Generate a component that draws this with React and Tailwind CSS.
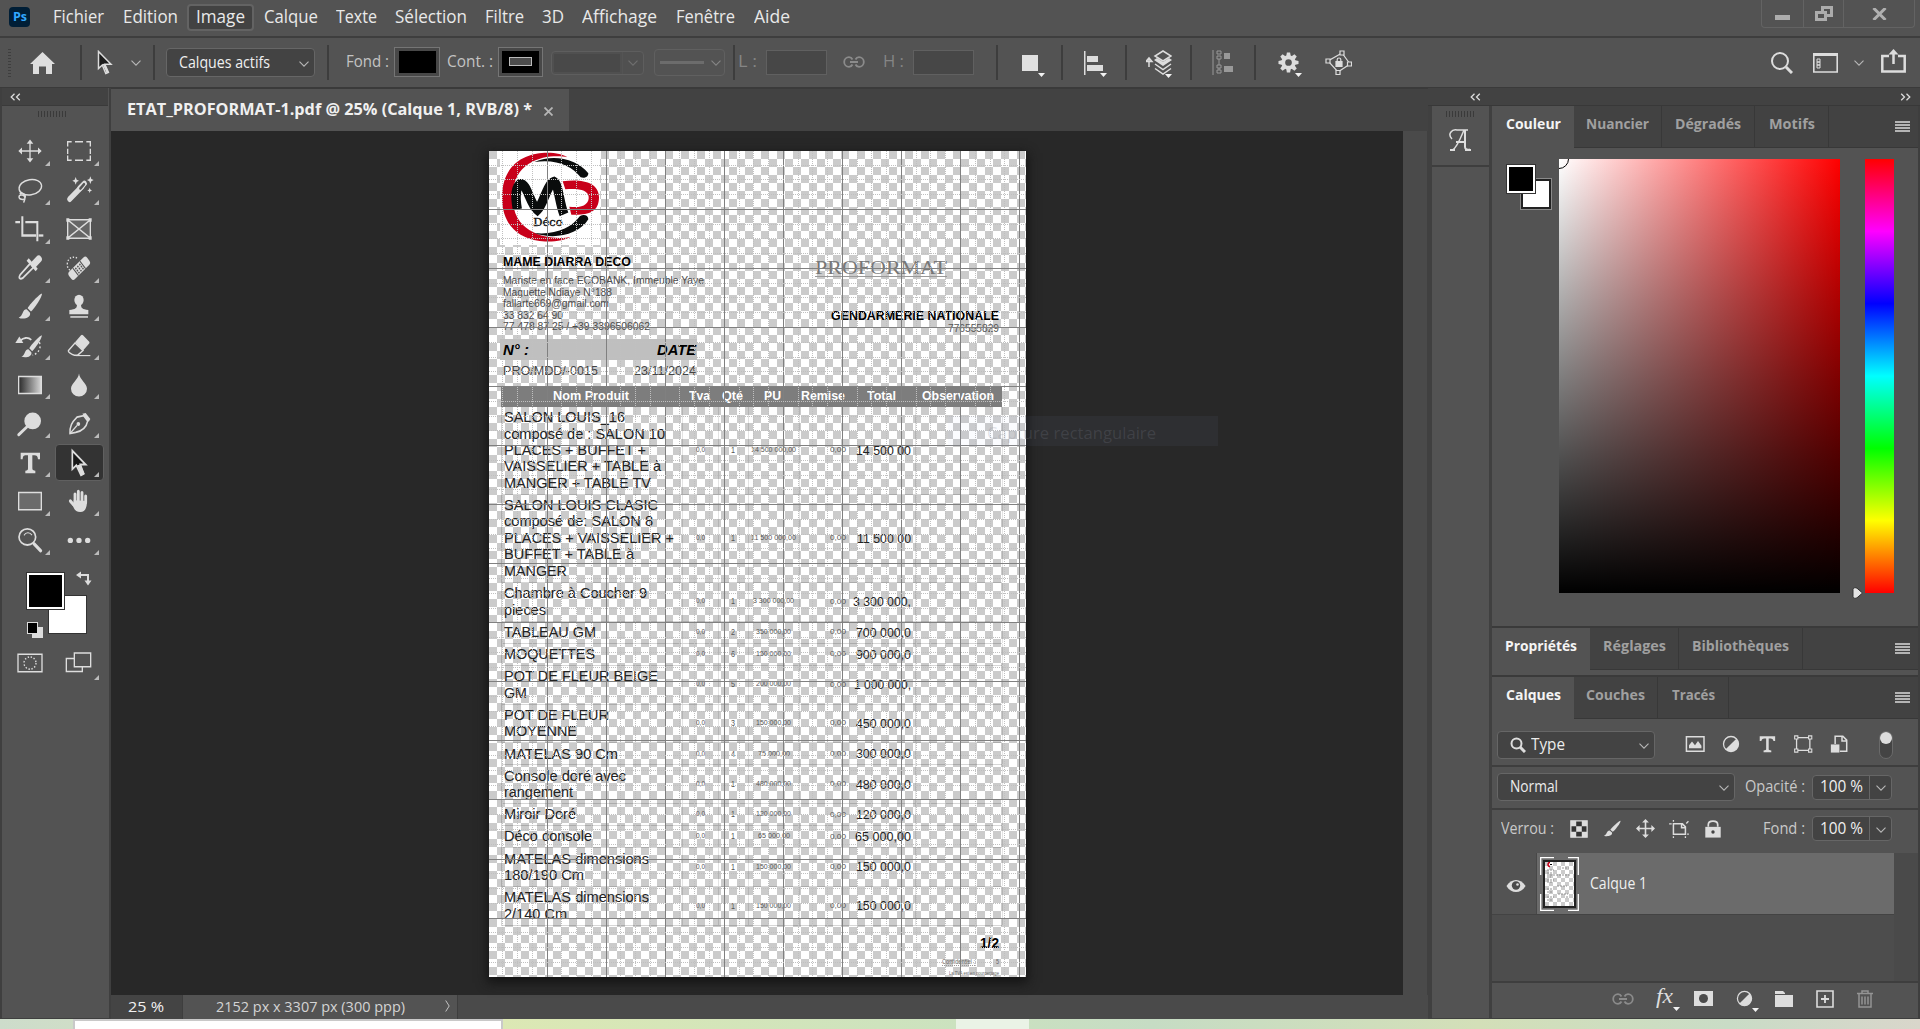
import { useLayoutEffect, useRef } from "react";

/* Text condensed or widened horizontally to a set width. */
function T({ w, className = "", children }) {
  const ref = useRef(null);
  useLayoutEffect(() => {
    const el = ref.current;
    el.style.transform = "none";
    const natural = el.getBoundingClientRect().width;
    if (natural) el.style.transform = `scaleX(${w / natural})`;
  }, [w, children]);
  return (
    <span className={"inline-block shrink-0 whitespace-pre " + className} style={{ width: w }}>
      <span ref={ref} className="inline-block origin-left">{children}</span>
    </span>
  );
}

/* Icon drawn on a centred 84x84 grid. */
function Ic({ className = "h-7 w-7", children }) {
  return (
    <svg viewBox="-42 -42 84 84" className={"shrink-0 overflow-visible " + className} fill="none" stroke="#dddddd" strokeWidth="5">
      {children}
    </svg>
  );
}
const F = { fill: "#dddddd", stroke: "none" };

const Chev = ({ className = "" }) => (
  <svg viewBox="0 0 10 6" className={"h-1.5 w-2.5 shrink-0 " + className} fill="none" stroke="#b8b8b8" strokeWidth="1.1">
    <path d="M.5.7 5 5.2 9.5.7" />
  </svg>
);
const Sep = ({ className }) => <div className={"h-[35px] w-0.5 shrink-0 bg-[#3d3d3d] " + className} />;
const Burger = () => (
  <div className="mr-2 flex w-[15px] flex-col gap-px">
    {[0, 1, 2, 3].map((i) => <i key={i} className="h-0.5 bg-[#b4b4b4]" />)}
  </div>
);
const Grip = ({ className }) => (
  <div className={"flex gap-0.5 " + className}>
    {Array.from({ length: 10 }, (_, i) => <i key={i} className="h-1.5 w-px bg-[#3a3a3a]" />)}
  </div>
);
const Double = ({ right }) => (
  <svg viewBox="0 0 11 8" className={"h-2 w-[11px] " + (right ? "-scale-x-100" : "")} fill="none" stroke="#dcdcdc" strokeWidth="1.3">
    <path d="M4.5.8 1.2 4l3.3 3.2M9.8.8 6.5 4l3.3 3.2" />
  </svg>
);
const Tri = ({ className }) => (
  <svg viewBox="0 0 7 4" className={"h-1 w-[7px] " + className} fill="#f2f2f2"><path d="M0 0h7L3.5 4z" /></svg>
);
const LinkIcon = ({ className, color = "#8b8b8b" }) => (
  <svg viewBox="0 0 22 12" className={"h-3 w-[22px] shrink-0 " + className} fill="none" stroke={color} strokeWidth="1.8">
    <path d="M9.5 3.5C8.600 1.600 7.500 1.200 6 1.200a4.800 4.800 0 0 0 0 9.600c1.500 0 2.600-.4 3.500-2.300M12.500 3.500c.9-1.900 2-2.300 3.500-2.300a4.800 4.800 0 0 1 0 9.600c-1.500 0-2.600-.4-3.500-2.300M7 6h8" />
  </svg>
);

const MENU = [
  ["Fichier", 51, "w-[69px]"], ["Edition", 55, "w-[74px]"], ["Image", 49, "w-[67px] rounded border-2 border-[#636363] bg-[#424242]"],
  ["Calque", 54, "w-[73px]"], ["Texte", 41, "w-[59px]"], ["Sélection", 72, "w-[90px]"], ["Filtre", 39, "w-[57px]"],
  ["3D", 22, "w-[40px]"], ["Affichage", 75, "w-[93px]"], ["Fenêtre", 59, "w-[79px]"], ["Aide", 36, "w-[54px]"],
];

function MenuBar() {
  return (
    <header className="flex h-9 items-start bg-[#535353]">
      <div className="ml-[9px] mt-[7px] flex h-5 w-[21px] items-center justify-center rounded bg-[#001e36] text-[12px] font-bold leading-none text-[#31a8ff]">
        <T w={14}>Ps</T>
      </div>
      <nav className="ml-3.5 flex pt-[4px] text-[17.500px] leading-none text-[#e9e9e9]">
        {MENU.map(([t, w, c]) => (
          <div key={t} className={"flex h-[27px] items-center justify-center pb-px " + c}><T w={w}>{t}</T></div>
        ))}
      </nav>
      <div className="ml-auto mr-[5px] flex h-7 rounded-b border border-t-0 border-[#636363]">
        <div className="flex w-[42px] items-center justify-center border-r border-[#636363]"><i className="mt-2 h-[5px] w-[15px] bg-[#acacac]" /></div>
        <div className="flex w-10 items-center justify-center border-r border-[#636363]">
          <svg viewBox="0 0 18 15" className="h-[15px] w-[18px]" fill="none" stroke="#acacac" strokeWidth="3"><path d="M1.500 6.500h9v7h-9zM7.500 5V1.500h9v8H12" /></svg>
        </div>
        <div className="flex w-[70px] items-center justify-center">
          <svg viewBox="0 0 15 12" className="h-3 w-[15px]" stroke="#b0b0b0" strokeWidth="3"><path d="M1.500 0 13.500 12M13.500 0 1.500 12" /></svg>
        </div>
      </div>
    </header>
  );
}

const Swatch = ({ className, children }) => (
  <div className={"flex h-[30px] shrink-0 items-center justify-center border border-[#757575] bg-[#484848] " + className}>
    <div className="flex h-[22px] w-[37px] items-center justify-center bg-black">{children}</div>
  </div>
);

function OptionsBar() {
  return (
    <div className="flex h-[52px] items-center border-b border-t-2 border-b-[#3a3a3a] border-t-[#3e3e3e] bg-[#535353] text-[15.500px] leading-none text-[#c3c3c3]">
      <div className="ml-2 h-7 w-[3px] bg-[repeating-linear-gradient(#3e3e3e_0_1px,transparent_1px_3px)]" />
      <svg viewBox="0 0 25 22" className="ml-[19px] h-[22px] w-[25px] shrink-0" fill="#dedede"><path d="M12.500 0 25 12h-3v10h-6v-7.500H9V22H3V12H0z" /></svg>
      <Sep className="ml-[25px]" />
      <svg viewBox="0 0 16 25" className="ml-[15px] h-[25px] w-4 shrink-0" stroke="#dddddd" strokeWidth="1.500"><path d="M1.500 1.500v17l3.800-3.500 3.500 8.500 2.600-1.200-3.600-8H14z" fill="#1d1d1d" /><path d="m5.500 14 4 9 2-1-3.500-8z" fill="#ddd" stroke="none" /></svg>
      <Chev className="ml-[18px]" />
      <Sep className="ml-3" />
      <div className="ml-[11px] flex h-[29px] w-[149px] shrink-0 items-center rounded border border-[#666] bg-[#434343] pl-3 pr-[5px] text-[#f0f0f0]">
        <T w={91}>Calques actifs</T><Chev className="ml-auto mt-0.5" />
      </div>
      <Sep className="ml-3" />
      <T w={43} className="-mt-0.5 ml-[17px]">Fond :</T>
      <Swatch className="-mt-0.5 ml-[5px] w-[46px]" />
      <T w={46} className="-mt-0.5 ml-[7px]">Cont. :</T>
      <Swatch className="-mt-0.5 ml-[5px] w-[45px]"><i className="h-[9px] w-[23px] border border-[#bbb] bg-[#4d4d4d]" /></Swatch>
      <div className="ml-2 flex h-6 w-[93px] shrink-0 rounded-sm border border-[#5e5e5e] bg-[#505050]">
        <div className="m-0.5 w-[66px] bg-[#494949]" /><div className="flex flex-1 items-center justify-center border-l border-[#5e5e5e] opacity-30"><Chev /></div>
      </div>
      <div className="ml-2.5 flex h-[27px] w-[71px] shrink-0 items-center rounded border border-[#606060] pl-[5px]">
        <i className="h-[3px] w-[44px] bg-[#6c6c6c]" /><Chev className="ml-[7px] opacity-50" />
      </div>
      <Sep className="ml-2" />
      <T w={19} className="-mt-0.5 ml-[3px] text-[#858585]">L :</T>
      <div className="ml-[9px] h-[25px] w-[61px] shrink-0 border border-[#606060] bg-[#474747]" />
      <LinkIcon className="-mt-0.5 ml-4" />
      <T w={21} className="-mt-0.5 ml-[18px] text-[#858585]">H :</T>
      <div className="ml-[9px] h-[25px] w-[61px] shrink-0 border border-[#606060] bg-[#474747]" />
      <Sep className="ml-[22px]" />
      <div className="relative ml-6 h-4 w-[22px] shrink-0"><i className="block h-4 w-4 bg-[#e0e0e0]" /><Tri className="absolute -bottom-[6px] -right-[1px]" /></div>
      <Sep className="ml-[17px]" />
      <div className="relative ml-[21px] w-[22px] shrink-0">
        <svg viewBox="0 0 22 24" className="h-6 w-[22px]" fill="#ddd"><path d="M0 0h1.500v24H0zM3 5h11v6H3zM3 14h16v6H3z" /></svg><Tri className="absolute -bottom-[2px] -right-[1px]" />
      </div>
      <Sep className="ml-[19px]" />
      <div className="relative ml-[19px] w-[26px] shrink-0">
        <svg viewBox="0 0 26 26" className="h-[26px] w-[26px]" fill="none" stroke="#ddd" strokeWidth="1.500"><path d="M3 17V9M0 11.500 3 8l3 3.500zM17 1l8 5-8 5-8-5z" /><path d="m8 10 9 6 9-6-3-2-6 4-6-4z" fill="#ddd" stroke="none" /><path d="m9 14 8 5.500 8-5.500M9 18.500l8 5.500 8-5.500" /></svg><Tri className="absolute -bottom-[2px] right-0" />
      </div>
      <Sep className="ml-[18px]" />
      <svg viewBox="0 0 22 25" className="ml-5 h-[25px] w-[22px] shrink-0 fill-[#999]" stroke="#999"><path d="M1 0v25M7 6.500v14" fill="none" /><path d="M5 1h4v3H5zM5 6h4v3H5zM5 15h4v3H5zM5 20h4v3H5z" fill="#535353" /><path d="M12 3h6v6h-6zM12 16h9v6h-9z" stroke="none" /></svg>
      <Sep className="ml-5" />
      <div className="relative ml-[22px] w-[23px] shrink-0">
        <svg viewBox="-11 -11 22 22" className="h-[21px] w-[21px]" fill="#ddd">
          {Array.from({ length: 8 }, (_, i) => <path key={i} d="M-2.500 -6-1.700 -10.500h3.400L2.500 -6z" transform={`rotate(${i * 45})`} />)}
          <circle r="5.500" fill="none" stroke="#ddd" strokeWidth="4" />
        </svg><Tri className="absolute -bottom-[4px] -right-px" />
      </div>
      <svg viewBox="0 0 27 25" className="ml-6 h-[25px] w-[27px] shrink-0" fill="#535353" stroke="#ddd" strokeWidth="1.200"><path d="M17 3 3 11l10 11 12-8z" /><path d="M15 1h4v4h-4zM1 9h4v4H1zM22.500 12h4v4h-4zM11 20.500h4v4h-4z" /><path d="M11 11.500h6v5h-6z" fill="#ddd" /><path d="M12.200 11.500V9.500c0-2 3.600-2 3.600 0v2" fill="none" /></svg>
      <svg viewBox="0 0 22 22" className="ml-auto h-[22px] w-[22px] shrink-0" fill="none" stroke="#ddd"><circle cx="9" cy="9" r="8" strokeWidth="2" /><path d="m15 15 6 6" strokeWidth="3" /></svg>
      <svg viewBox="0 0 25 20" className="ml-5 h-5 w-[25px] shrink-0" fill="none" stroke="#ddd"><path d="M.8 1h23.400v18H.8z" strokeWidth="1.600" /><path d="M0 1.500h25" strokeWidth="3" /><path d="M4 6h3v3H4zM4 9h3v3H4zM4 12h3v3H4z" /></svg>
      <Chev className="ml-4" />
      <svg viewBox="0 0 25 24" className="ml-[17px] mr-3.5 h-6 w-[25px] shrink-0 -translate-y-0.5" fill="none" stroke="#ddd" strokeWidth="2.500"><path d="M8 7H1.300v15.500h22.400V7H17M12.500 15V4" /><path d="M7.500 5.500 12.500 0l5 5.500z" fill="#ddd" stroke="none" /></svg>
    </div>
  );
}

const brush = <><path {...F} d="M36-35C30-35-2-6-7 3L3 12C14 4 37-27 36-35z" /><path {...F} d="M-10 6C-24 6-20 24-34 28-20 34 4 28 0 15z" /></>;
const cursor = <><path d="M-20-32V16L-8 6 6 32 14 28 4 4H20z" fill="#161616" strokeWidth="5" /><path {...F} d="M-6 6 7 33 17 28 4 4z" /></>;
const TOOLS = [
  <><path d="M-28 0H28M0-22V22" strokeWidth="4" /><path {...F} d="M-35 0-24-9V9zM35 0 24-9V9zM0-30-10-19H10zM0 30-10 19H10z" /></>,
  <path d="M-34-12V-24H-22M-12-24H12M22-24H34V-12M34-6V8M34 12V24H22M12 24H-12M-22 24H-34V12M-34 8V-6" strokeWidth="4" />,
  <><ellipse cx="2" cy="-7" rx="34" ry="20" transform="rotate(-8)" strokeWidth="4" /><path d="M-31 10c10-5 20 4 16 11s-18 3-18-3 14-7 17 0-2 10-3 15" strokeWidth="4" /></>,
  <><path d="M-28 24 10-10" strokeWidth="15" strokeLinecap="round" /><path d="M2-4 16-17" stroke="#dddddd" strokeWidth="15" strokeLinecap="round" /><path d="M4-4 15-15" stroke="#535353" strokeWidth="7" strokeLinecap="round" /><path {...F} d="M-10-34l3 7 7 3-7 3-3 7-3-7-7-3 7-3zM34-36l3 7 7 3-7 3-3 7-3-7-7-3 7-3zM32-6l2 5 5 2-5 2-2 5-2-5-5-2 5-2z" /></>,
  <><path d="M-23-33V17H18M-44-18H-30M-14-18H22V32" strokeWidth="6" /><path d="M26 17H40" strokeWidth="6" /></>,
  <><path d="M-34-24H34V24H-34z" strokeWidth="4" fill="#666" /><path d="M-34-24 34 24M34-24-34 24" strokeWidth="4" /><path {...F} d="M-38-28h9v9h-9zM29-28h9v9h-9zM-38 19h9v9h-9zM29 19h9v9h-9z" /></>,
  <><path d="M2-13-29 17C-36 27-30 31-20 25L12-3" strokeWidth="5" /><path d="M12-10 26-23" strokeWidth="19" strokeLinecap="round" /><path d="M-7-22 20 5" strokeWidth="9" /></>,
  <><path d="M-6-26C-18-32-34-26-35-12-36 0-30 6-24 6" strokeDasharray="4 5" strokeWidth="4" /><g transform="rotate(-41)"><rect x="-36" y="-12" width="72" height="26" rx="8" {...F} /><path d="M-14-12V14M14-12V14" stroke="#535353" strokeWidth="3" /><g fill="#535353" stroke="none">{[-8, 0, 8].map((x) => [-5, 2, 9].map((y) => <circle key={x + "," + y} cx={x} cy={y} r="2.500" />))}</g></g></>,
  brush,
  <><circle cx="0" cy="-18" r="14" {...F} /><path {...F} d="M-6-8H6C6 4 10 5 28 8V19H-29V8C-10 5-6 4-6-8z" /><path d="M-26 26H27" strokeWidth="4" /></>,
  <><g transform="translate(4 3) scale(.88)">{brush}</g><path d="M-32-12C-20-22-6-24 4-16" strokeWidth="5" /><path {...F} d="M-44-8-32-25-20-8z" /><path d="M28-10c8 18-6 30-20 34" strokeDasharray="5 6" strokeWidth="4" /></>,
  <><path {...F} d="M6-28C8-30 10-30 12-28L30-12C32-10 32-8 30-6L12 12-12-10z" /><path d="M-12-8-32 12C-34 16-22 22-14 24L-4 24 12 12z" strokeWidth="4" /><path d="M-10 25H34" strokeWidth="3" /></>,
  <><defs><linearGradient id="gr"><stop stopColor="#2a2a2a" /><stop offset="1" stopColor="#d8d8d8" /></linearGradient></defs><path d="M-34-22H34V22H-34z" fill="url(#gr)" strokeWidth="4" /></>,
  <path {...F} d="M0-30C2-14 24-4 24 10A24 20 0 0 1-24 10C-24-4-2-14 0-30z" />,
  <><ellipse cx="8" cy="-8" rx="25" ry="22" {...F} /><path d="M-10 8-34 28" strokeWidth="8" strokeLinecap="round" /></>,
  <><path d="M-27 25C-28 6-22-4-6-18L14-22 26-8C22 10 10 18-10 22z" strokeWidth="4.500" /><path {...F} d="M10-27 20-29 34-13 29-6z" /><path d="M-27 25-6 4" strokeWidth="3.500" /><circle cx="-2" cy="0" r="5.500" {...F} /></>,
  <path {...F} d="M-28-27H30V-10H24C23-18 20-20 13-20H7V14C7 19 10 20 16 20V27H-14V20C-8 20-6 19-6 14V-20H-12C-19-20-21-18-22-10H-28z" />,
  cursor,
  <path d="M-34-22H34V23H-34z" fill="#6b6b6b" strokeWidth="4" />,
  <><path d="M-12 2V-18M-2 0V-25M9 0V-22M20 4V-13M-26 0-16 10" strokeWidth="8.500" strokeLinecap="round" /><path {...F} d="M-22 4C-16 20-12 29 4 29S24 14 24 0L-16-2V6z" /></>,
  <><ellipse cx="-8" cy="-8" rx="25" ry="21" strokeWidth="5" /><path d="M-18-12C-12-22 0-20 6-13" strokeWidth="3" /><path d="M12 10 32 28" strokeWidth="9" strokeLinecap="round" /></>,
  <g {...F}><ellipse cx="-26" cy="1" rx="8" ry="7" /><ellipse cy="1" rx="8" ry="7" /><ellipse cx="26" cy="1" rx="8" ry="7" /></g>,
];

function ToolPanel() {
  return (
    <aside className="flex w-[111px] flex-col border-x-2 border-b border-[#3f3f3f] bg-[#535353] pr-px">
      <div className="flex h-[18px] items-center border-b border-[#3a3a3a] bg-[#424242] pl-2"><Double /></div>
      <Grip className="ml-[36px] mt-[5px]" />
      <div className="ml-[4px] mt-[15px] grid grid-cols-[49px_49px] auto-rows-[38.900px]">
        {TOOLS.map((t, i) => (
          <div key={i} className="relative flex items-center justify-center">
            {i === 17 && <div className="absolute inset-x-0 inset-y-px rounded border border-[#606060] bg-[#333]" />}
            <Ic className="relative h-7 w-7 -translate-x-px"><g transform="scale(1 1.148)">{t}</g></Ic>
            {i !== 5 && <svg viewBox="0 0 5 5" className="absolute bottom-[5px] right-[5px] h-[5px] w-[5px]" fill="#bbb"><path d="M5 0v5H0z" /></svg>}
          </div>
        ))}
      </div>
      <div className="relative ml-[23px] mt-[8px] h-[72px] w-[72px]">
        <div className="absolute left-[23px] top-[27px] h-[39px] w-[39px] border border-[#333] bg-white" />
        <div className="absolute left-[1px] top-[4px] h-[38px] w-[39px] border border-[#333] bg-black outline-2 -outline-offset-3 outline-white" />
        <svg viewBox="0 0 16 14" className="absolute left-[51px] top-[3px] h-[15px] w-4" fill="none" stroke="#ddd" strokeWidth="2"><path d="M3 3.500h9V10" /><path d="M0 3.500 5 0v7zM8.500 9h7L12 14z" fill="#ddd" stroke="none" /></svg>
        <div className="absolute left-[7px] top-[59px] h-[11px] w-[11px] bg-[#ddd]" />
        <div className="absolute left-[2px] top-[54px] h-[12px] w-[11px] border border-[#ddd] bg-black" />
      </div>
      <div className="ml-[4px] mt-[7px] grid h-[33px] grid-cols-[49px_49px]">
        <div className="flex items-center justify-center"><Ic className="h-7 w-7 -translate-x-px"><g transform="scale(1 1.148)"><path d="M-36-23H36V23H-36z" strokeWidth="4" /><ellipse rx="18" ry="16" strokeDasharray="4 5" strokeWidth="4" /></g></Ic></div>
        <div className="relative flex items-center justify-center"><Ic className="h-7 w-7 -translate-x-px"><g transform="scale(1 1.148)"><path d="M-38-12H10V22H-38z" strokeWidth="4" /><path d="M-14-26H35V10H-14z" fill="#535353" strokeWidth="4" /></g></Ic>
          <svg viewBox="0 0 5 5" className="absolute bottom-0 right-[5px] h-[5px] w-[5px]" fill="#bbb"><path d="M5 0v5H0z" /></svg></div>
      </div>
    </aside>
  );
}

/* Name lines with widths, quantity, unit price, total, row height. */
const ROWS = [
  { n: [["SALON LOUIS_16", 121], ["composé de : SALON 10", 161], ["PLACES + BUFFET +", 142], ["VAISSELIER + TABLE à", 157], ["MANGER + TABLE TV", 147]], q: "1", p: ["14 500 000,00", 45], t: ["14 500 00", 55], h: "h-[87.500px]" },
  { n: [["SALON LOUIS CLASIC", 154], ["composé de: SALON 8", 149], ["PLACES + VAISSELIER +", 170], ["BUFFET + TABLE à", 130], ["MANGER", 63]], q: "1", p: ["11 500 000,00", 45], t: ["11 500 00", 54], h: "h-[88px]" },
  { n: [["Chambre à Coucher 9", 143], ["pieces", 42]], q: "1", p: ["3 300 000,00", 41], t: ["3 300 000,", 58], h: "h-[39px]" },
  { n: [["TABLEAU GM", 92]], q: "2", p: ["350 000,00", 35], t: ["700 000,0", 55], h: "h-[22px]" },
  { n: [["MOQUETTES", 91]], q: "6", p: ["150 000,00", 35], t: ["900 000,0", 55], h: "h-[22px]" },
  { n: [["POT DE FLEUR BEIGE", 154], ["GM", 23]], q: "5", p: ["200 000,00", 35], t: ["1 000 000,", 57], h: "h-[39px]" },
  { n: [["POT DE FLEUR", 105], ["MOYENNE", 73]], q: "3", p: ["150 000,00", 35], t: ["450 000,0", 55], h: "h-[38.800px]" },
  { n: [["MATELAS 90 Cm", 114]], q: "4", p: ["75 000,00", 32], t: ["300 000,0", 55], h: "h-[22px]" },
  { n: [["Console doré avec", 122], ["rangement", 69]], q: "1", p: ["480 000,00", 35], t: ["480 000,0", 55], h: "h-[38.800px]" },
  { n: [["Miroir Doré", 72]], q: "1", p: ["120 000,00", 35], t: ["120 000,0", 55], h: "h-[22px]" },
  { n: [["Déco console", 88]], q: "1", p: ["65 000,00", 32], t: ["65 000,00", 56], h: "h-[22px]" },
  { n: [["MATELAS dimensions", 145], ["180/190 Cm", 80]], q: "1", p: ["150 000,00", 35], t: ["150 000,0", 55], h: "h-[38.800px]" },
  { n: [["MATELAS dimensions", 145], ["2/140 Cm", 63]], q: "1", p: ["150 000,00", 35], t: ["150 000,0", 55], h: "h-[38.800px]" },
];
const COLS = "grid grid-cols-[180.300px_36.200px_29.200px_51px_50.600px_66.200px_87.200px]";

function GridOverlay() {
  const step = 59.06;
  const xs = Array.from({ length: 37 }, (_, i) => i);
  const ys = Array.from({ length: 56 }, (_, i) => i);
  return (
    <svg viewBox="0 0 537 826" className="pointer-events-none absolute inset-0 h-[826px] w-[537px]" shapeRendering="crispEdges">
      {xs.map((i) => {
        const x = Math.floor(-1 + (i * step) / 4) + 0.5;
        return <path key={"x" + i} d={`M${x} 0V826`} stroke={i % 4 ? "#c0c0c0" : "#808080"} strokeDasharray={i % 4 ? "1 1" : undefined} />;
      })}
      {ys.map((i) => {
        const y = Math.floor(-0.7 + (i * step) / 4) + 0.5;
        return <path key={"y" + i} d={`M0 ${y}H537`} stroke={i % 4 ? "#c0c0c0" : "#808080"} strokeDasharray={i % 4 ? "1 1" : undefined} />;
      })}
    </svg>
  );
}

function Logo() {
  return (
    <svg viewBox="60 33 300 282" className="h-[94px] w-[100px] bg-white">
      <path d="M262 52C228 28 66 20 66 172S230 316 272 290C240 300 98 300 98 172S226 44 262 52z" fill="#c8001a" />
      <path d="M163 66C220 42 290 56 325 100C325 112 312 116 302 112C276 76 226 56 163 66z" fill="#0a0c0c" />
      <path d="M163 279C220 300 296 286 325 238C325 226 312 222 300 228C276 262 226 286 163 279z" fill="#0a0c0c" />
      <path d="M112 208C105 170 108 140 121 131C140 128 150 192 172 210C192 190 200 134 222 125C236 134 238 190 252 223" fill="none" stroke="#0a0c0c" strokeWidth="28" />
      <path d="M248 124C300 116 357 124 357 172S320 226 274 224L268 200C310 206 328 190 326 170S296 144 256 148z" fill="#c8001a" />
      <text x="160" y="258" fontSize="31" textLength="88" lengthAdjust="spacingAndGlyphs" fontFamily="DejaVu Serif, Liberation Serif, serif" fill="#111" stroke="#111">Déco</text>
    </svg>
  );
}

function Page() {
  return (
    <div className="relative h-[826px] w-[537px] shrink-0 overflow-hidden bg-[conic-gradient(#fff_25%,#cbcbcb_0_50%,#fff_0_75%,#cbcbcb_0)] bg-[length:16px_16px] font-['Liberation_Sans',Arial,sans-serif] leading-none text-[#1c1c1c]">
      <div className="flex h-[235px] justify-between">
        <div className="ml-[11px] w-[220px]">
          <Logo />
          <div className="ml-[3px] mt-[10px] h-[14px] text-[12.500px] font-bold leading-[14px] text-black"><T w={128}>MAME DIARRA DECO</T></div>
          <div className="ml-[3px] mt-[6px] flex flex-col text-[10.500px] leading-[11.500px] text-[#4a4a4a]">
            <T w={201}>Mariste en face ECOBANK, Immeuble Yaye</T>
            <T w={109}>Maguette Ndiaye N°188</T>
            <T w={106}>fallarte669@gmail.com</T>
            <T w={60}>33 832 64 90</T>
            <T w={147}>77 478 87 25 / +39 3396506062</T>
          </div>
          <div className="mt-[6.500px] flex h-[21px] w-[197px] items-center justify-between bg-[#bfbfbf] pl-[3px] pr-[1px] pt-px text-[14.500px] font-bold italic text-black">
            <T w={26}>N° :</T><T w={39} className="underline underline-offset-2">DATE</T>
          </div>
          <div className="mt-[4px] flex w-[197px] justify-between pl-[3px] pr-[1px] text-[12.500px] leading-[14px] text-[#444]">
            <T w={95}>PRO/MDD/-0015</T><T w={62}>23/11/2024</T>
          </div>
        </div>
        <div className="mr-[27px] mt-[108px] flex flex-col items-end">
          <T w={132} className="mr-[52px] border-b border-[#999] font-['Liberation_Serif',serif] text-[19px] leading-[17px] text-[#777]">PROFORMAT</T>
          <T w={168} className="mt-[32px] text-[12.500px] font-bold leading-[14px] text-black">GENDARMERIE NATIONALE</T>
          <T w={51} className="text-[10.500px] leading-[11px] text-[#555]">776555829</T>
        </div>
      </div>
      <div className="ml-3 w-[501px]">
        <div className={COLS + " h-[21px] items-center justify-items-center bg-[#7d7d7d] pb-px text-[12.500px] font-bold text-white"}>
          {[["Nom Produit", 76], ["Tva", 21], ["Qté", 21], ["PU", 17], ["Remise", 44], ["Total", 29], ["Observation", 72]].map(([t, w]) => <T key={t} w={w}>{t}</T>)}
        </div>
        {ROWS.map((r, i) => (
          <div key={i} className={COLS + " items-center border-b border-l border-[#00000028] text-[6.500px] text-[#555] " + r.h}>
            <div className="flex flex-col pl-[1.500px] text-[14.500px] leading-[16.350px] text-[#222]">{r.n.map(([t, w]) => <T key={t} w={w}>{t}</T>)}</div>
            <Cell className="justify-center"><T w={9}>0,0</T></Cell>
            <Cell className="justify-center pr-px text-[8.500px]"><T w={4}>{r.q}</T></Cell>
            <Cell className="justify-center"><T w={r.p[1]}>{r.p[0]}</T></Cell>
            <Cell className="justify-end pr-[3px] text-[8px]"><T w={16}>0,00</T></Cell>
            <Cell className="justify-end pr-[4px] text-[13px] text-[#222]"><T w={r.t[1]}>{r.t[0]}</T></Cell>
            <Cell className="border-r" />
          </div>
        ))}
      </div>
      <div className="mr-[27px] flex flex-col items-end text-[#666]">
        <T w={19} className="mt-[10px] text-[14px] font-bold text-black">1/2</T>
        <div className="mt-[8px] flex gap-[21px] text-[7px]"><T w={33} className="border-b border-dotted border-[#999]">Confidentiel :</T><T w={3}>5</T></div>
        <T w={50} className="mt-[4px] text-[6px]">La TVA est en pourcentage</T>
      </div>
      <GridOverlay />
    </div>
  );
}
function Cell({ className = "", children }) {
  return <div className={"flex h-full items-center border-l border-[#0000001c] " + className}>{children}</div>;
}

function Workspace() {
  return (
    <main className="flex w-[1317px] flex-col bg-[#424242]">
      <div className="flex h-[43px] border-t border-[#3a3a3a]">
        <div className="flex w-[458px] items-center bg-[#535353] pb-0.5 pl-4 text-[16px] font-bold leading-none text-[#f0f0f0]">
          <T w={405}>ETAT_PROFORMAT-1.pdf @ 25% (Calque 1, RVB/8) *</T>
          <svg viewBox="0 0 9 9" className="ml-3 mt-1 h-[9px] w-[9px]" stroke="#b5b5b5" strokeWidth="1.800"><path d="m.5.5 8 8M8.500.5l-8 8" /></svg>
        </div>
      </div>
      <div className="flex h-[864px]">
        <div className="relative flex w-[1292px] bg-[#282828] pl-[378px] pt-5">
          <div className="h-[826px] shadow-[0_4px_10px_2px_#151515]"><Page /></div>
          <div className="absolute left-[837px] top-[285px] flex h-[30px] w-[270px] items-center bg-[#a0c0ff0c] pl-[39px] pt-[3px] text-[16px] leading-none text-[#8084903a]">
            <T w={169}>Capture rectangulaire</T>
          </div>
        </div>
        <div className="flex-1 border-r border-[#404040] bg-[#4a4a4a]" />
      </div>
      <div className="flex h-6 items-center bg-[#4a4a4a] text-[15px] leading-none">
        <div className="flex h-full w-[72px] items-center border-r border-[#3e3e3e] bg-[#444] pb-0.5 pl-[17px] text-[#f0f0f0]"><T w={36}>25 %</T></div>
        <div className="flex h-full w-[275px] items-center border-r border-[#3e3e3e] bg-[#535353] pb-0.5 pl-[33px] text-[#d4d4d4]">
          <T w={189}>2152 px x 3307 px (300 ppp)</T>
          <svg viewBox="0 0 5 12" className="ml-10 h-3 w-[5px]" fill="none" stroke="#c4c4c4"><path d="M.7.5 4.200 6 .7 11.500" /></svg>
        </div>
      </div>
    </main>
  );
}

function Tabs({ items, className = "" }) {
  return (
    <div className={"flex h-[42px] shrink-0 items-stretch bg-[#424242] text-[14.500px] font-bold leading-none text-[#a0a0a0] " + className}>
      {items.map(([t, w, c], i) => (
        <div key={t} className={"flex justify-center pt-[11px] " + c + (i ? " border-b border-r border-[#383838]" : " bg-[#535353] text-[#f4f4f4]")}><T w={w}>{t}</T></div>
      ))}
      <div className="flex flex-1 items-center justify-end border-b border-[#383838]"><Burger /></div>
    </div>
  );
}

const Percent = () => (
  <div className="flex h-[25px] w-[80px] items-center rounded-sm border border-[#666] bg-[#434343] text-[#f0f0f0]">
    <div className="flex h-full w-[57px] items-center justify-center border-r border-[#666]"><T w={43}>100 %</T></div>
    <Chev className="ml-[6px] mt-0.5" />
  </div>
);
const Half = () => <><circle r="35" strokeWidth="6" /><path {...F} d="M25-25A35 35 0 0 1-25 25z" /></>;

function LayersPanel() {
  return (
    <section className="flex h-[344px] flex-col border-t-2 border-[#3a3a3a] bg-[#535353] text-[15.500px] leading-none text-[#c9c9c9]">
      <Tabs items={[["Calques", 55, "w-[82px]"], ["Couches", 59, "w-[84px]"], ["Tracés", 43, "w-[71px]"]]} />
      <div className="flex h-[48px] items-center border-b-2 border-[#3e3e3e] pl-[5px]">
        <div className="mt-1.5 flex h-[28px] w-[158px] items-center rounded border border-[#666] bg-[#434343] pl-3 pr-[5px] text-[#ececec]">
          <svg viewBox="0 0 16 16" className="mr-[5px] h-4 w-4" fill="none" stroke="#ddd"><circle cx="6.500" cy="6.500" r="5" strokeWidth="2" /><path d="m10 10 5 5" strokeWidth="3" /></svg>
          <T w={34}>Type</T><Chev className="ml-auto mt-0.5" />
        </div>
        <div className="ml-[31px] mt-1 flex items-center gap-[18px]">
          <Ic className="h-[18px] w-[18px]"><path d="M-40-34H42V34H-40z" strokeWidth="7" /><path {...F} d="M-28 20V6L-14-12 0 6 14-14 30 8V20z" /></Ic>
          <Ic className="h-[18px] w-[18px]"><Half /></Ic>
          <Ic className="h-[18px] w-[18px]"><path {...F} d="M-34-36H38V-14H30C28-24 24-26 8-26V26C8 28 12 30 20 30V38H-16V30C-8 30-4 28-4 26V-26C-20-26-24-24-26-14H-34z" /></Ic>
          <Ic className="h-[18px] w-[18px]"><path d="M-30-30H32V30H-30z" strokeWidth="6" /><path d="M-39-38h15v15h-15zM26-38h15v15H26zM-39 23h15v15h-15zM26 23h15v15H26z" fill="#535353" strokeWidth="5" /></Ic>
          <Ic className="h-[18px] w-[18px]"><path d="M-18 0V-36H18L36-18V34H4M14-36V-14H36" strokeWidth="7" /><path {...F} d="M-38 2H2V40H-38z" /></Ic>
        </div>
        <div className="ml-[31px] mt-1.5 h-[28px] w-3.5 rounded-full border border-[#6a6a6a] bg-[#444]"><div className="h-3 w-3 rounded-full bg-[#ddd]" /></div>
      </div>
      <div className="flex h-[43px] items-center border-b-2 border-[#3e3e3e] pb-px pl-[5px]">
        <div className="flex h-[28px] w-[238px] items-center rounded border border-[#666] bg-[#434343] pl-3 pr-[5px] text-[#ececec]"><T w={48}>Normal</T><Chev className="ml-auto mt-0.5" /></div>
        <T w={60} className="ml-2.5 mr-[7px]">Opacité :</T><Percent />
      </div>
      <div className="flex h-[43px] items-center pb-1.5 pl-[9px]">
        <T w={53}>Verrou :</T>
        <div className="ml-[16px] flex items-center gap-[14px]">
          <Ic className="h-[18px] w-[18px]"><path d="M-38-38H38V38H-38z" strokeWidth="6" fill="#333" /><path {...F} d="M-38-38h25v25h-25zM13-38h25v25H13zM-13-13h26v26h-26zM-38 13h25v25h-25zM13 13h25v25H13z" /></Ic>
          <Ic className="h-[20px] w-[20px]">{brush}</Ic>
          <Ic className="h-[19px] w-[19px]"><path d="M-32 0H32M0-32V32" strokeWidth="7" /><path {...F} d="M-42 0-26-15V15zM42 0 26-15V15zM0-42-15-26H15zM0 42-15 26H15z" /></Ic>
          <Ic className="h-[18px] w-[20px]"><path d="M-26-24H16L30-10V24H-26zM12-24V-6H30" strokeWidth="7" /><path d="M-46-24H-34M-26-42V-34M34-26 44-36M38 24H46M-26 34V42M30 34V42" strokeWidth="6" /></Ic>
          <Ic className="ml-px h-[18px] w-[18px]"><path {...F} d="M-36-10H36V40H-36z" /><path d="M-22-10V-20C-22-42 22-42 22-20V-10" strokeWidth="8" /><circle cy="14" r="8" fill="#444" stroke="none" /></Ic>
        </div>
        <T w={42} className="ml-auto mr-[7px]">Fond :</T><div className="mr-[26px]"><Percent /></div>
      </div>
      <div className="flex h-[128px]">
        <div className="w-[402px] bg-[#4d4d4d]">
          <div className="flex h-[62px] border-b border-[#434343]">
            <div className="flex w-[45px] items-center justify-center border-r border-[#484848] bg-[#535353]">
              <svg viewBox="0 0 20 14" className="ml-1 mt-1 h-[14px] w-5"><path d="M.5 7C5-1 15-1 19.500 7 15 15 5 15 .5 7z" fill="#ddd" /><circle cx="10" cy="6.500" r="4.200" fill="#4a4a4a" /><circle cx="11.500" cy="5.500" r="1.300" fill="#ddd" /></svg>
            </div>
            <div className="flex flex-1 items-center bg-[#6b6b6b] pl-[3px] text-[15.500px] text-[#f0f0f0]">
              <div className="relative flex h-[54px] w-[39px] items-center justify-center">
                <svg viewBox="0 0 39 54" className="absolute inset-0 h-[54px] w-[39px]" fill="none" stroke="#fff" strokeWidth="1.300"><path d="M.7 18V.7H14M28 .7H38.300V18M38.300 37V53.300H28M14 53.300H.7V37" /></svg>
                <div className="h-[48px] w-[33px] border-2 border-[#222] bg-[conic-gradient(#fff_25%,#cbcbcb_0_50%,#fff_0_75%,#cbcbcb_0)] bg-[length:8px_8px]">
                  <svg viewBox="0 0 29 44" className="h-[44px] w-[29px]" fill="none" stroke="#888"><path d="M2 8h7M17 6h7M2 11h5M2 13h24M2 15h4M2 18h7M2 20h5M12 24h10M2 27h6M2 30h5M13 32h10M2 35h7M2 38h5M21 35h2" strokeDasharray="2 1" strokeWidth=".9" /><path d="M5 .5a2 2 0 1 0 0 4" stroke="#c8001a" strokeWidth="1.500" /><path d="M5 2.500h2" stroke="#000" /></svg>
                </div>
              </div>
              <T w={57} className="ml-[11px]">Calque 1</T>
            </div>
          </div>
        </div>
        <div className="flex-1 bg-[#4a4a4a]" />
      </div>
      <div className="flex flex-1 items-center border-b border-t-2 border-[#3e3e3e] pb-1 pl-[120px]">
        <LinkIcon />
        <div className="relative ml-[22px] h-[26px] w-[24px]"><T w={17} className="font-['Liberation_Serif',serif] text-[20px] italic text-[#ddd]">fx</T><Tri className="absolute bottom-[1px] right-0" /></div>
        <svg viewBox="0 0 19 15" className="ml-[14px] h-[15px] w-[19px]"><path d="M0 0h19v15H0z" fill="#ddd" /><circle cx="9.500" cy="7.500" r="4.500" fill="#4a4a4a" /></svg>
        <div className="relative ml-[23px] h-[18px] w-[23px]"><Ic className="h-[17px] w-[17px]"><Half /></Ic><Tri className="absolute -bottom-[4px] right-0" /></div>
        <svg viewBox="0 0 18 16" className="ml-[16px] h-4 w-[18px]" fill="#ddd"><path d="M0 0h8l2 2v1H0zM0 4h18v12H0z" /></svg>
        <svg viewBox="0 0 18 18" className="ml-[23px] h-[18px] w-[18px]" fill="none" stroke="#ddd"><path d="M1 1h16v16H1z" strokeWidth="1.600" /><path d="M9 5v8M5 9h8" strokeWidth="1.800" /></svg>
        <svg viewBox="0 0 16 18" className="ml-[23px] h-[18px] w-4" fill="none" stroke="#949494" strokeWidth="1.500"><path d="M0 3.500h16M5 3V1h6v2M2 4v13h12V4M5 6.500v8M8 6.500v8M11 6.500v8" /></svg>
      </div>
    </section>
  );
}

function RightDock() {
  return (
    <div className="flex flex-1 flex-col bg-[#535353]">
      <div className="flex h-[18px] items-center justify-between border-b border-[#383838] bg-[#424242] pl-[42px] pr-[9px]"><Double /><Double right /></div>
      <div className="flex flex-1">
        <div className="flex w-[64px] flex-col border-b border-l-4 border-r-3 border-[#404040]">
          <div className="h-[61px] border-b-2 border-[#3e3e3e]">
            <Grip className="ml-[14px] mt-[5px]" />
            <svg viewBox="0 0 24 24" className="ml-[16px] mt-[11px] h-6 w-6" fill="none" stroke="#ddd" strokeWidth="2.200"><path d="M4 11C-1 6 4 1 9 2h11M4.500 22C9 20 13 9 16 2" strokeWidth="1.500" /><path d="M17 2v17c0 3 3 3 5 2.500M2 22h5M17 22h6M8 14h9" strokeWidth="2" /></svg>
          </div>
        </div>
        <div className="flex flex-1 flex-col border-r-2 border-[#3e3e3e]">
          <section className="flex h-[520px] flex-col">
            <Tabs items={[["Couleur", 55, "w-[82px]"], ["Nuancier", 63, "w-[88px]"], ["Dégradés", 66, "w-[93px]"], ["Motifs", 46, "w-[74px]"]]} />
            <div className="mt-[11px] flex">
              <div className="relative ml-3.5 h-[52px] w-[46px]">
                <div className="absolute left-[14px] top-[19px] h-[32px] w-[32px] border border-[#8a8a8a] bg-white outline-2 -outline-offset-3 outline-[#222]" />
                <div className="absolute left-0 top-[5px] h-[30px] w-[30px] border border-[#333] bg-black outline-2 -outline-offset-3 outline-white" />
              </div>
              <div className="ml-[7px] h-[434px] w-[281px] bg-[linear-gradient(to_top,#000,transparent),linear-gradient(to_right,#fff,#f00)]">
                <svg viewBox="0 0 11 11" className="h-[11px] w-[11px]" fill="none" stroke="#000"><path d="M9.500 0A9.500 9.500 0 0 1 0 9.500" /></svg>
              </div>
              <div className="flex w-[25px] items-end justify-end pr-[2px]"><svg viewBox="0 0 11 12" className="h-3 w-[11px] translate-y-1.5" fill="#e4e4e4" stroke="#333"><path d="M1 2.500C1 .5 4 .3 5 1.200L10.500 6 5 10.800C4 11.700 1 11.500 1 9.500z" /></svg></div>
              <div className="h-[434px] w-[29px] bg-[linear-gradient(#f00,#f0f,#00f,#0ff,#0f0,#ff0,#f00)]" />
            </div>
          </section>
          <section className="h-[49px] border-t-2 border-[#3a3a3a]"><Tabs items={[["Propriétés", 72, "w-[98px]"], ["Réglages", 63, "w-[89px]"], ["Bibliothèques", 97, "w-[124px]"]]} /></section>
          <LayersPanel />
        </div>
      </div>
    </div>
  );
}

export default function App() {
  return (
    <div className="flex h-[1029px] w-[1920px] flex-col overflow-hidden bg-[#3e3e3e] font-['Open_Sans','Noto_Sans',sans-serif]">
      <MenuBar />
      <OptionsBar />
      <div className="flex h-[931px]"><ToolPanel /><Workspace /><RightDock /></div>
      <div className="flex flex-1 bg-[linear-gradient(to_right,#cddccb,#dce8b4_26%,#cbe2bf_50%,#c6dcc4_60%,#d3dfb8_77%,#c9dcc6_90%,#d9d6cb)]">
        <div className="ml-[73px] w-[430px] border-2 border-b-0 border-[#c9c9c9] bg-white" />
        <div className="ml-[453px] w-[73px] bg-[#eaf3e6]" />
      </div>
    </div>
  );
}
